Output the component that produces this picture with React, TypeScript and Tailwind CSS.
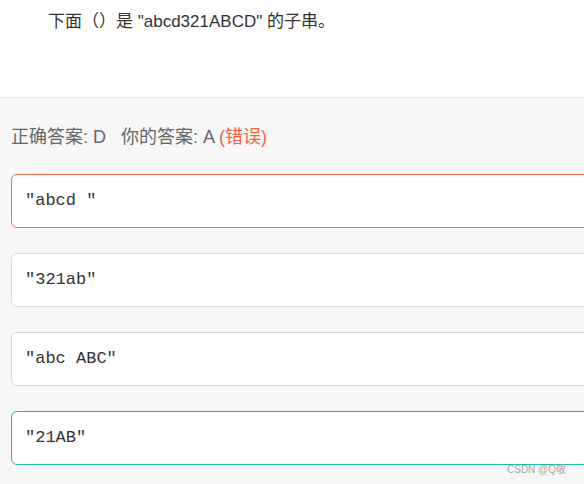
export default function App() {
  const opciones = [
    { texto: '"abcd "', clase: "border border-[#f76b4e]" },
    { texto: '"321ab"', clase: "border border-[#d9d9d9]" },
    { texto: '"abc ABC"', clase: "border border-[#d9d9d9]" },
    { texto: '"21AB"', clase: "border border-[#1dbf9d]" },
  ]

  return (
    <div className="relative w-[584px] h-[484px] overflow-hidden bg-[#f7f7f7] font-['Liberation_Sans','Noto_Sans_CJK_SC',sans-serif]">
      {/* Pregunta */}
      <div className="h-[98px] bg-white border-b border-[#e6e6e6] pl-[48px] pt-[10px]">
        <p className="text-[17px] leading-[24px] text-[#333]">
          下面（）是 "abcd321ABCD" 的子串。
        </p>
      </div>

      {/* Respuesta */}
      <div className="h-[76px] pl-[11px] pt-[27px] text-[18px] leading-[24px] text-[#666]">
        正确答案: D&nbsp;&nbsp;&nbsp;你的答案: A <span className="text-[#f7623e]">(错误)</span>
      </div>

      {/* Opciones */}
      <div className="flex flex-col gap-[25px] pl-[11px]">
        {opciones.map((o) => (
          <div
            key={o.texto}
            className={`w-[620px] h-[54px] flex items-center pl-[13px] bg-white rounded-[6px] ${o.clase}`}
          >
            <span className="font-['Liberation_Mono',monospace] text-[17px] leading-[24px] text-[#333] whitespace-pre">
              {o.texto}
            </span>
          </div>
        ))}
      </div>

      <span className="absolute left-[507px] top-[462px] text-[10px] text-[#aaa]">CSDN @Q敬</span>
    </div>
  )
}
